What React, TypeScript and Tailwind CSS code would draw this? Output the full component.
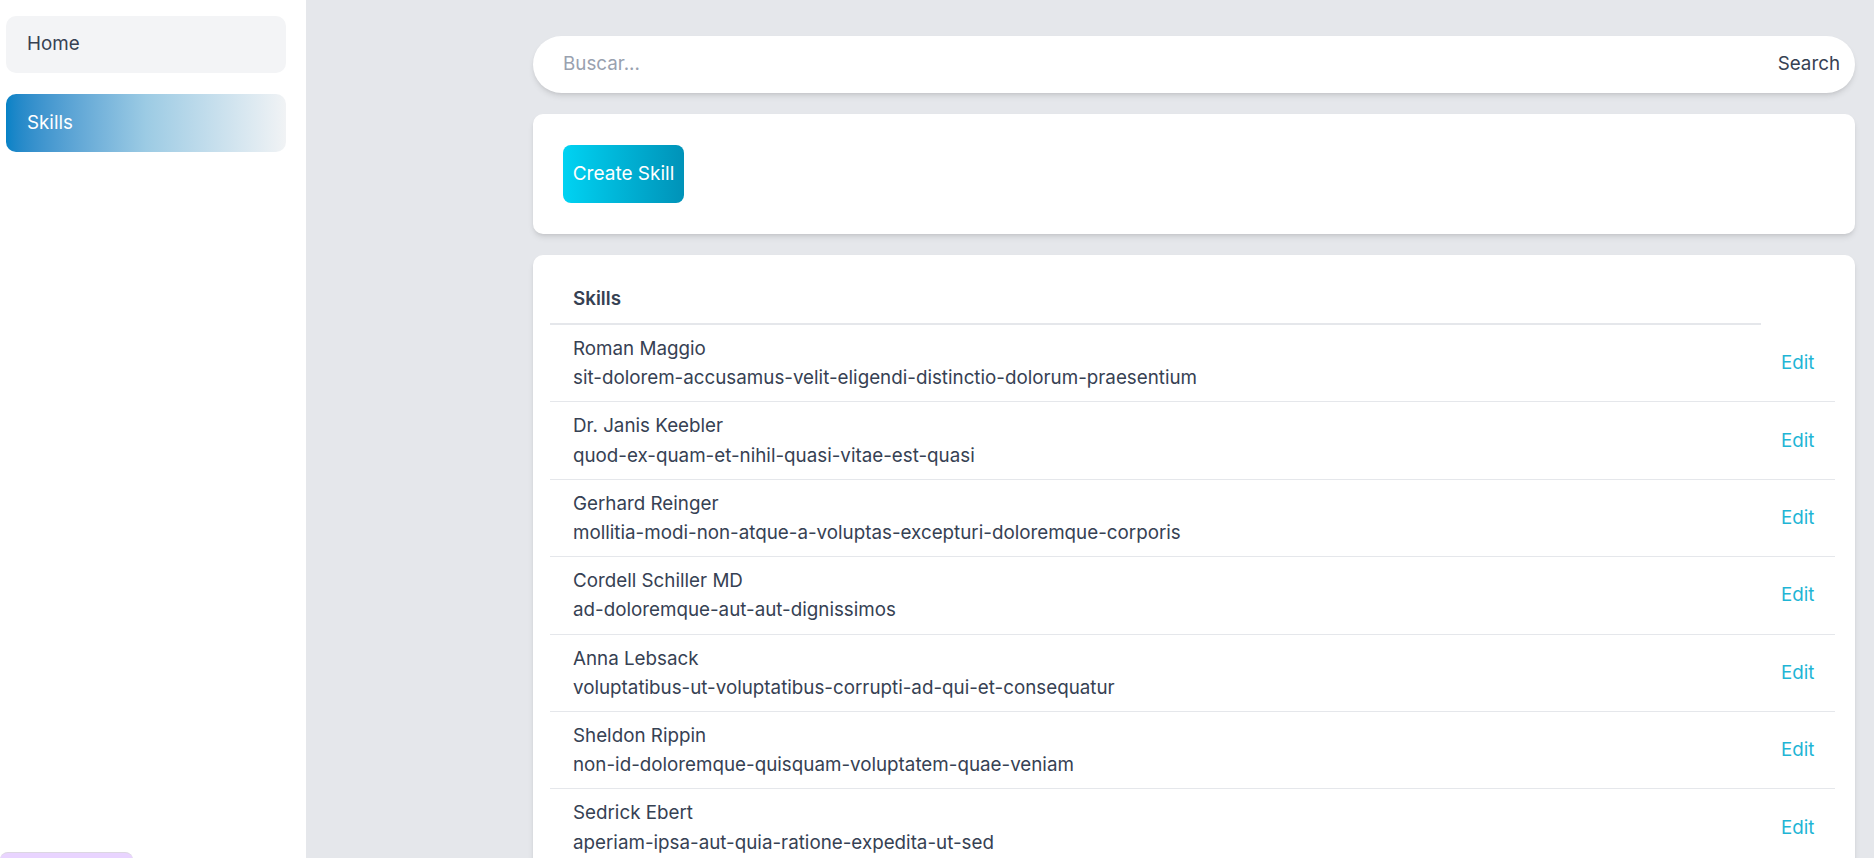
import { useState } from "react";

type Skill = {
  id: number;
  name: string;
  slug: string;
};

const skills: Skill[] = [
  { id: 1, name: "Roman Maggio", slug: "sit-dolorem-accusamus-velit-eligendi-distinctio-dolorum-praesentium" },
  { id: 2, name: "Dr. Janis Keebler", slug: "quod-ex-quam-et-nihil-quasi-vitae-est-quasi" },
  { id: 3, name: "Gerhard Reinger", slug: "mollitia-modi-non-atque-a-voluptas-excepturi-doloremque-corporis" },
  { id: 4, name: "Cordell Schiller MD", slug: "ad-doloremque-aut-aut-dignissimos" },
  { id: 5, name: "Anna Lebsack", slug: "voluptatibus-ut-voluptatibus-corrupti-ad-qui-et-consequatur" },
  { id: 6, name: "Sheldon Rippin", slug: "non-id-doloremque-quisquam-voluptatem-quae-veniam" },
  { id: 7, name: "Sedrick Ebert", slug: "aperiam-ipsa-aut-quia-ratione-expedita-ut-sed" },
];

function Sidebar() {
  return (
    <aside className="w-[306px] shrink-0 h-screen bg-white flex flex-col justify-between overflow-hidden">
      <nav className="flex flex-col gap-[21px] pt-[16px] pl-[6px] pr-[20px]">
        <a className="h-[57px] flex items-center pl-[21px] rounded-[10px] bg-gray-100 text-gray-700 text-[18.8px]">
          Home
        </a>
        <a className="h-[58px] flex items-center pl-[21px] rounded-[10px] bg-gradient-to-r from-[#0582c6] via-[#9ccbe4] to-[#f1f3f5] text-white text-[18.8px]">
          Skills
        </a>
      </nav>
      {/* logout button, mostly below the fold */}
      <button className="w-[133px] h-[48px] shrink-0 -mb-[42px] rounded-lg bg-purple-200 border-t border-[#dcd6e2]" />
    </aside>
  );
}

function SearchBar() {
  const [query, setQuery] = useState("");

  return (
    <div className="h-[57px] shrink-0 bg-white rounded-full shadow-md flex items-center pl-[30px] pr-[15px]">
      <input
        value={query}
        onChange={(e) => setQuery(e.target.value)}
        placeholder="Buscar..."
        className="flex-1 outline-none text-[18.8px] text-gray-700 placeholder:text-gray-400 bg-transparent"
      />
      <button className="text-[18.8px] text-gray-700">Search</button>
    </div>
  );
}

function SkillsTable() {
  return (
    <div className="shrink-0 bg-white rounded-[10px] shadow-md pt-[19px] pl-[17px] pr-[20px] pb-[19px]">
      <table className="w-full">
        <thead>
          <tr>
            <th className="text-left font-semibold text-gray-700 text-[18.8px] leading-[29px] px-[23px] py-[10px] border-b-2 border-gray-200">
              Skills
            </th>
          </tr>
        </thead>
        <tbody>
          {skills.map((skill) => (
            <tr key={skill.id} className="border-b border-gray-200">
              <td className="px-[23px] py-[9px] text-[18.8px] leading-[29.2px] text-gray-700">
                <div>{skill.name}</div>
                <div>{skill.slug}</div>
              </td>
              <td className="w-[74px] px-[20px] text-[18.8px] text-[#1fb5d5]">
                <a>Edit</a>
              </td>
            </tr>
          ))}
        </tbody>
      </table>
    </div>
  );
}

export default function App() {
  return (
    <div className="flex h-screen overflow-hidden bg-gray-200 font-['Inter',sans-serif]">
      <Sidebar />
      <main className="flex-1 flex flex-col gap-[21px] pt-[36px] pl-[227px] pr-[19px]">
        <SearchBar />
        <div className="shrink-0 bg-white rounded-[10px] shadow-md pt-[31px] pb-[31px] px-[30px]">
          <button className="w-[121px] h-[58px] rounded-[8px] bg-gradient-to-r from-cyan-400 to-cyan-600 text-white text-[19px]">
            Create Skill
          </button>
        </div>
        <SkillsTable />
      </main>
    </div>
  );
}
